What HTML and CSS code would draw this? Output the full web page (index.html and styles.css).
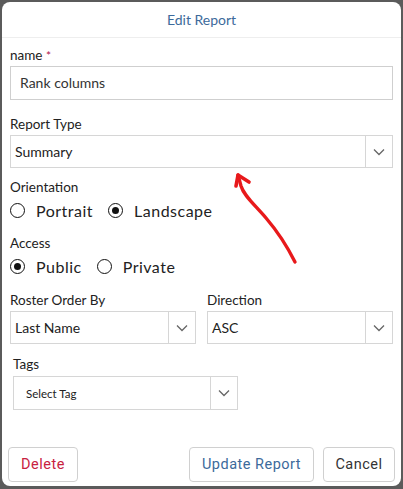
FILE: index.html
```html
<!DOCTYPE html>
<html>
<head>
<meta charset="utf-8">
<link rel="stylesheet" href="styles.css">
</head>
<body>
<div class="modal">
  <div class="header">Edit Report</div>
  <div class="content">
    <div class="group g-name">
      <div class="label">name <span class="req">*</span></div>
      <div class="input">Rank columns</div>
    </div>
    <div class="group g-type">
      <div class="label">Report Type</div>
      <div class="select">
        <span class="value">Summary</span>
        <span class="arrow"><svg width="12" height="8" viewBox="0 0 12 8"><path d="M1 1.5 L6 6.5 L11 1.5" fill="none" stroke="#666" stroke-width="1.3"/></svg></span>
      </div>
    </div>
    <div class="group g-orient">
      <div class="label">Orientation</div>
      <div class="radios">
        <span class="radio"><span class="circle"></span>Portrait</span>
        <span class="radio"><span class="circle on"></span>Landscape</span>
      </div>
    </div>
    <div class="group g-access">
      <div class="label">Access</div>
      <div class="radios">
        <span class="radio"><span class="circle on"></span>Public</span>
        <span class="radio"><span class="circle"></span>Private</span>
      </div>
    </div>
    <div class="row g-roster">
      <div class="group col">
        <div class="label">Roster Order By</div>
        <div class="select">
          <span class="value">Last Name</span>
          <span class="arrow"><svg width="12" height="8" viewBox="0 0 12 8"><path d="M1 1.5 L6 6.5 L11 1.5" fill="none" stroke="#666" stroke-width="1.3"/></svg></span>
        </div>
      </div>
      <div class="group col">
        <div class="label">Direction</div>
        <div class="select">
          <span class="value">ASC</span>
          <span class="arrow"><svg width="12" height="8" viewBox="0 0 12 8"><path d="M1 1.5 L6 6.5 L11 1.5" fill="none" stroke="#666" stroke-width="1.3"/></svg></span>
        </div>
      </div>
    </div>
    <div class="group g-tags">
      <div class="label">Tags</div>
      <div class="select tags">
        <span class="value small">Select Tag</span>
        <span class="arrow"><svg width="12" height="8" viewBox="0 0 12 8"><path d="M1 1.5 L6 6.5 L11 1.5" fill="none" stroke="#666" stroke-width="1.3"/></svg></span>
      </div>
    </div>
  </div>
  <div class="footer">
    <button class="btn delete">Delete</button>
    <span class="spacer"></span>
    <button class="btn update">Update Report</button>
    <button class="btn cancel">Cancel</button>
  </div>
  <svg class="annot" width="403" height="489" viewBox="0 0 403 489">
    <path d="M295 262 C 288 248, 278 232, 266 218 C 254 204, 244 196, 241 186 L 238 175" fill="none" stroke="#e8191b" stroke-width="3.4" stroke-linecap="round" stroke-linejoin="round"/>
    <path d="M236 186 L 238 175 L 249 182" fill="none" stroke="#e8191b" stroke-width="3.6" stroke-linecap="round" stroke-linejoin="round"/>
  </svg>
</div>
</body>
</html>
```
FILE: styles.css
```css
html, body {
  margin: 0;
  padding: 0;
}
body {
  background: #5b5b5b;
  width: 403px;
  height: 489px;
  overflow: hidden;
  font-family: "Lato", "Liberation Sans", sans-serif;
  color: #222;
}
.modal {
  position: relative;
  margin: 2px 2px 0 2px;
  width: 399px;
  height: 484px;
  background: #fff;
  border-radius: 8px;
  display: flex;
  flex-direction: column;
}
.header {
  height: 35px;
  line-height: 35px;
  text-align: center;
  font-size: 14px;
  color: #3c6a9b;
  border-bottom: 1px solid #eeeeee;
}
.content {
  padding: 9px 8px 0 8px;
  display: flex;
  flex-direction: column;
}
.label {
  font-size: 13.5px;
  line-height: 16px;
  color: #222;
}
.req {
  color: #b0164a;
  font-size: 12px;
}
.input {
  margin-top: 2px;
  height: 32px;
  border: 1px solid #cfcfcf;
  line-height: 32px;
  padding-left: 9px;
  font-size: 14px;
  color: #333;
}
.select {
  margin-top: 3px;
  height: 31px;
  border: 1px solid #d6d6d6;
  display: flex;
  align-items: center;
}
.select .value {
  flex: 1;
  padding-left: 4px;
  font-size: 14px;
  color: #222;
}
.select .value.small {
  font-size: 11.5px;
  padding-left: 12px;
}
.select .arrow {
  width: 26px;
  height: 100%;
  border-left: 1px solid #d6d6d6;
  display: flex;
  align-items: center;
  justify-content: center;
}
.g-type { margin-top: 16px; }
.g-orient { margin-top: 11px; }
.g-access { margin-top: 15px; }
.radios {
  margin-top: 5px;
  height: 20px;
  display: flex;
  align-items: center;
  gap: 15px;
}
.radio {
  display: inline-flex;
  align-items: center;
  gap: 11px;
  font-size: 16px;
  color: #222;
  letter-spacing: 0.5px;
}
.circle {
  width: 13px;
  height: 13px;
  border: 1.6px solid #111;
  border-radius: 50%;
  position: relative;
  display: inline-block;
}
.circle.on::after {
  content: "";
  position: absolute;
  left: 3px;
  top: 3px;
  width: 7px;
  height: 7px;
  border-radius: 50%;
  background: #111;
}
.row {
  display: flex;
  gap: 11px;
}
.row .col { flex: 1; }
.g-roster { margin-top: 16px; }
.g-tags { margin-top: 12px; padding-left: 3px; }
.select.tags {
  margin-top: 4px;
  width: 223px;
  height: 32px;
}
.footer {
  margin-top: auto;
  padding: 0 6px 4px 6px;
  display: flex;
  align-items: center;
}
.spacer { flex: 1; }
.btn {
  height: 35px;
  background: #fff;
  border: 1px solid #d0d0d0;
  border-radius: 4px;
  font-family: "Roboto", "Liberation Sans", sans-serif;
  font-size: 14.5px;
  letter-spacing: 0.5px;
  padding: 0;
}
.delete { width: 70px; color: #c8223f; }
.update { width: 125px; color: #3c6a9b; margin-right: 9px; }
.cancel { width: 72px; color: #333; }
.annot {
  position: absolute;
  left: -2px;
  top: -2px;
  pointer-events: none;
}
```
